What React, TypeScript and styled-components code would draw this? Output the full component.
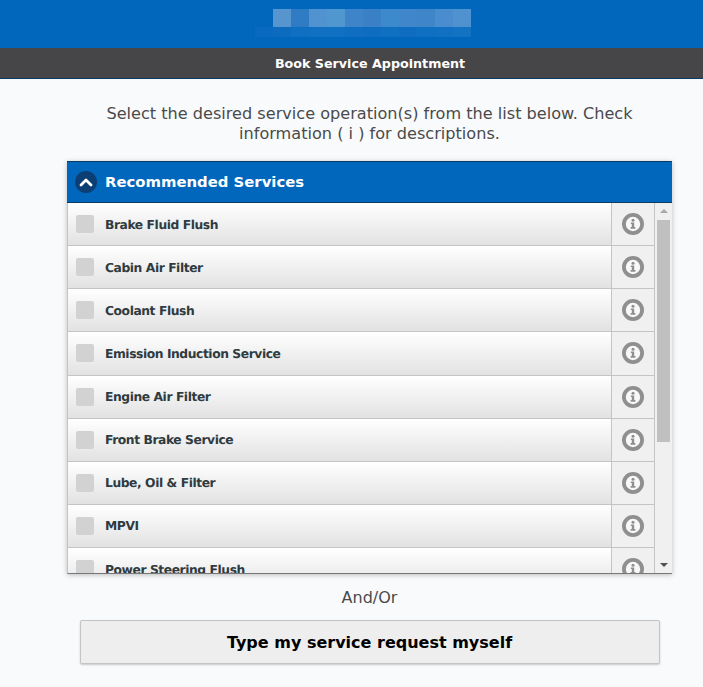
import React from 'react';
import styled, { createGlobalStyle } from 'styled-components';

const GlobalStyle = createGlobalStyle`
  html, body { margin: 0; padding: 0; height: 100%; }
  body {
    background: #f8fafc;
    font-family: 'DejaVu Sans', Verdana, sans-serif;
    overflow: hidden;
  }
`;

const Page = styled.div`
  height: 687px;
  display: flex;
  flex-direction: column;
`;

const Brand = styled.header`
  height: 48px;
  background: #0067bd;
  display: flex;
  padding: 9px 0 0 255px;
  box-sizing: border-box;
`;

const BlurredLogo = styled.div`
  display: grid;
  grid-template-columns: repeat(12, 18px);
  grid-template-rows: 18px 10px;
  height: 28px;
`;

const Pixel = styled.span<{ $tone: string }>`
  background: ${p => p.$tone};
`;

const TitleBar = styled.div`
  height: 30px;
  background: #464547;
  border-bottom: 1px solid #0b3a63;
  display: flex;
  align-items: center;
  justify-content: center;
  color: #fff;
  font-size: 12.7px;
  font-weight: 700;
  padding-left: 37px;
`;

const Content = styled.main`
  width: 605px;
  margin-left: 67px;
  display: flex;
  flex-direction: column;
`;

const Intro = styled.p`
  margin: 25px auto 17px;
  width: 540px;
  color: #4a4a4a;
  font-size: 16.12px;
  line-height: 20px;
  text-align: center;
  height: 40px;
`;

const Panel = styled.section`
  box-shadow: 0 1px 5px rgba(0, 0, 0, 0.25);
`;

const PanelHeader = styled.div`
  height: 40px;
  background: #0067bd;
  border-top: 1px solid #0b3a63;
  border-bottom: 1px solid #0b3a63;
  display: flex;
  align-items: center;
  gap: 8px;
  padding-left: 8px;
  color: #fff;
  font-size: 14.85px;
  font-weight: 700;
`;

const HeaderLabel = styled.span`
  margin-bottom: 1px;
`;

const Collapse = styled.span`
  width: 22px;
  height: 22px;
  border-radius: 50%;
  background: #0b3f73;
  display: flex;
  align-items: center;
  justify-content: center;
`;

const ListArea = styled.div`
  height: 370px;
  display: flex;
  background: #f0f0f0;
  border-left: 1px solid #c4c4c4;
  border-bottom: 1px solid #777;
`;

const Rows = styled.div`
  flex: 1;
  overflow: hidden;
`;

const Row = styled.div`
  height: 43.125px;
  box-sizing: border-box;
  display: flex;
  align-items: stretch;
  border-bottom: 1px solid #c4c4c4;
`;

const RowMain = styled.label`
  flex: 1;
  display: flex;
  align-items: center;
  gap: 11px;
  padding-left: 8px;
  background: linear-gradient(#ffffff, #e2e2e2);
  color: #2f3b40;
  font-size: 12.3px;
  font-weight: 700;
  letter-spacing: -0.43px;
  text-rendering: geometricPrecision;
  white-space: nowrap;
`;

const ServiceName = styled.span`
  margin-top: 1px;
`;

const Check = styled.span`
  width: 18px;
  height: 18px;
  border-radius: 2px;
  background: #d2d2d2;
`;

const InfoCell = styled.div`
  width: 42px;
  border-left: 1px solid #c4c4c4;
  background: #f0f0f0;
  display: flex;
  align-items: center;
  justify-content: center;
`;

const Scrollbar = styled.div`
  width: 17px;
  border-left: 1px solid #c4c4c4;
  background: #f0f0f0;
  display: flex;
  flex-direction: column;
  align-items: center;
`;

const ArrowUp = styled.span`
  margin-top: 6px;
  width: 0;
  height: 0;
  border-left: 4px solid transparent;
  border-right: 4px solid transparent;
  border-bottom: 4px solid #a8a8a8;
`;

const Thumb = styled.div`
  width: 13px;
  height: 222px;
  margin-top: 7px;
  background: #c0c0c0;
`;

const ArrowDown = styled.span`
  margin-top: auto;
  margin-bottom: 6px;
  width: 0;
  height: 0;
  border-left: 4px solid transparent;
  border-right: 4px solid transparent;
  border-top: 4px solid #505050;
`;

const Divider = styled.div`
  margin-top: 14px;
  color: #4a4a4a;
  font-size: 16px;
  line-height: 20px;
  text-align: center;
`;

const RequestButton = styled.button`
  display: block;
  width: 580px;
  height: 44px;
  margin: 12px auto 0;
  background: #eeeeee;
  border: 1px solid #c4c4c4;
  border-radius: 2px;
  box-shadow: 0 1px 2px rgba(0, 0, 0, 0.2);
  color: #000;
  font-family: inherit;
  font-size: 16px;
  font-weight: 700;
`;

const InfoIcon = () => (
  <svg width="22" height="22" viewBox="0 0 22 22">
    <circle cx="11" cy="11" r="9.1" fill="#f8f8f8" stroke="#8f8f8f" strokeWidth="3.8" />
    <circle cx="11" cy="7.2" r="1.5" fill="#8f8f8f" />
    <path d="M8.8 9.5h3.4v4.6h1.2v1.6H8.6v-1.6h1.2v-3h-1z" fill="#8f8f8f" />
  </svg>
);

const ChevronUp = () => (
  <svg width="14" height="10" viewBox="0 0 14 10">
    <path d="M2 8l5-5 5 5" fill="none" stroke="#fff" strokeWidth="2.8" strokeLinecap="round" strokeLinejoin="round" />
  </svg>
);

const logoTop = ['#0067bd', '#5795cf', '#2f7cc5', '#5193d0', '#5097cf', '#3d85c8', '#3a80c6', '#3c8acb', '#3f87ca', '#3f86c9', '#4a8dce', '#5092d0'];
const logoBottom = ['#0869bf', '#0c6bbf', '#0f6fc1', '#1170c2', '#1070c1', '#0f6ec1', '#0e6dc0', '#0f6fc1', '#0e6dc0', '#0f6fc1', '#1170c2', '#1373c3'];

const services = [
  'Brake Fluid Flush',
  'Cabin Air Filter',
  'Coolant Flush',
  'Emission Induction Service',
  'Engine Air Filter',
  'Front Brake Service',
  'Lube, Oil & Filter',
  'MPVI',
  'Power Steering Flush',
];

const App: React.FC = () => {
  return (
    <Page>
      <GlobalStyle />
      <Brand>
        <BlurredLogo>
          {logoTop.map((tone, i) => <Pixel key={'t' + i} $tone={tone} />)}
          {logoBottom.map((tone, i) => <Pixel key={'b' + i} $tone={tone} />)}
        </BlurredLogo>
      </Brand>
      <TitleBar>Book Service Appointment</TitleBar>
      <Content>
        <Intro>
          Select the desired service operation(s) from the list below. Check information ( i ) for descriptions.
        </Intro>
        <Panel>
          <PanelHeader>
            <Collapse><ChevronUp /></Collapse>
            <HeaderLabel>Recommended Services</HeaderLabel>
          </PanelHeader>
          <ListArea>
            <Rows>
              {services.map(name => (
                <Row key={name}>
                  <RowMain>
                    <Check />
                    <ServiceName>{name}</ServiceName>
                  </RowMain>
                  <InfoCell><InfoIcon /></InfoCell>
                </Row>
              ))}
            </Rows>
            <Scrollbar>
              <ArrowUp />
              <Thumb />
              <ArrowDown />
            </Scrollbar>
          </ListArea>
        </Panel>
        <Divider>And/Or</Divider>
        <RequestButton type="button">Type my service request myself</RequestButton>
      </Content>
    </Page>
  );
};

export default App;
